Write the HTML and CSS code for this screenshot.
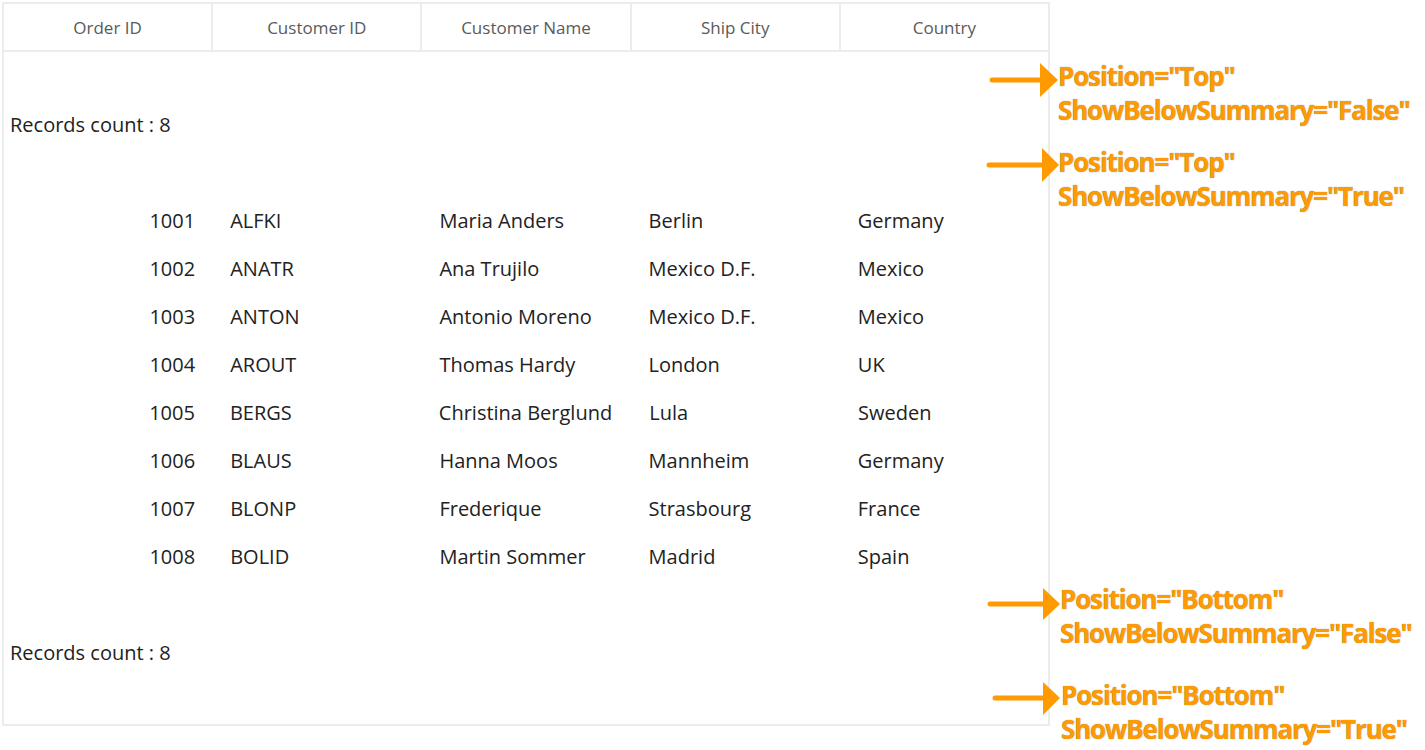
FILE: index.html
```html
<!DOCTYPE html>
<html>
<head>
<meta charset="utf-8">
<link rel="stylesheet" href="styles.css">
</head>
<body>
<div class="page">
  <div class="grid">
    <div class="header">
      <div class="hcell">Order ID</div>
      <div class="hcell">Customer ID</div>
      <div class="hcell">Customer Name</div>
      <div class="hcell">Ship City</div>
      <div class="hcell">Country</div>
    </div>
    <div class="body">
      <div class="row"></div>
      <div class="row summary">Records count : 8</div>
      <div class="row"></div>
      <div class="row data"><div class="cell num">1001</div><div class="cell">ALFKI</div><div class="cell">Maria Anders</div><div class="cell">Berlin</div><div class="cell">Germany</div></div>
      <div class="row data"><div class="cell num">1002</div><div class="cell">ANATR</div><div class="cell">Ana Trujilo</div><div class="cell">Mexico D.F.</div><div class="cell">Mexico</div></div>
      <div class="row data"><div class="cell num">1003</div><div class="cell">ANTON</div><div class="cell">Antonio Moreno</div><div class="cell">Mexico D.F.</div><div class="cell">Mexico</div></div>
      <div class="row data"><div class="cell num">1004</div><div class="cell">AROUT</div><div class="cell">Thomas Hardy</div><div class="cell">London</div><div class="cell">UK</div></div>
      <div class="row data"><div class="cell num">1005</div><div class="cell">BERGS</div><div class="cell">Christina Berglund</div><div class="cell">Lula</div><div class="cell">Sweden</div></div>
      <div class="row data"><div class="cell num">1006</div><div class="cell">BLAUS</div><div class="cell">Hanna Moos</div><div class="cell">Mannheim</div><div class="cell">Germany</div></div>
      <div class="row data"><div class="cell num">1007</div><div class="cell">BLONP</div><div class="cell">Frederique</div><div class="cell">Strasbourg</div><div class="cell">France</div></div>
      <div class="row data"><div class="cell num">1008</div><div class="cell">BOLID</div><div class="cell">Martin Sommer</div><div class="cell">Madrid</div><div class="cell">Spain</div></div>
      <div class="row"></div>
      <div class="row summary">Records count : 8</div>
      <div class="row"></div>
    </div>
  </div>

  <svg class="arrows" width="1425" height="750" viewBox="0 0 1425 750">
    <g stroke="#ff9a00" stroke-width="5" stroke-linecap="round" fill="none">
      <line x1="992" y1="80" x2="1044" y2="80"/>
      <line x1="989" y1="165" x2="1045" y2="165"/>
      <line x1="990" y1="604" x2="1045" y2="604"/>
      <line x1="995" y1="698" x2="1045" y2="698"/>
    </g>
    <g fill="#ff9a00">
      <polygon points="1040,63 1058,80 1040,97"/>
      <polygon points="1042,148 1059,165 1042,182"/>
      <polygon points="1043,588 1060,604 1043,620"/>
      <polygon points="1043,682 1060,698 1043,715"/>
    </g>
  </svg>

  <div class="note n1">Position="Top"<br>ShowBelowSummary="False"</div>
  <div class="note n2">Position="Top"<br>ShowBelowSummary="True"</div>
  <div class="note n3">Position="Bottom"<br>ShowBelowSummary="False"</div>
  <div class="note n4">Position="Bottom"<br>ShowBelowSummary="True"</div>
</div>
</body>
</html>
```

FILE: styles.css
```css
html, body {
  margin: 0;
  padding: 0;
  background: #ffffff;
}

.page {
  position: relative;
  width: 1425px;
  height: 750px;
  overflow: hidden;
  font-family: "Open Sans", "Noto Sans", sans-serif;
}

.grid {
  margin: 2px;
  width: 1048px;
  box-sizing: border-box;
  border: 2px solid #ececec;
  background: #ffffff;
}

.header {
  display: grid;
  grid-template-columns: repeat(5, 1fr);
  column-gap: 2px;
  background: #ececec;
  border-bottom: 2px solid #ececec;
}

.hcell {
  background: #ffffff;
  height: 46px;
  display: flex;
  align-items: center;
  justify-content: center;
  font-size: 17px;
  color: #5a5a5a;
}

.body {
  display: flex;
  flex-direction: column;
}

.row {
  height: 48px;
}

.summary {
  display: flex;
  align-items: center;
  padding-left: 6px;
  font-size: 20px;
  color: #222222;
}

.data {
  display: grid;
  grid-template-columns: repeat(5, 1fr);
  column-gap: 2px;
  align-items: center;
}

.cell {
  padding: 0 18px 0 17px;
  font-size: 20px;
  color: #222222;
  white-space: nowrap;
}

.cell.num {
  text-align: right;
  padding-right: 16px;
}

.arrows {
  position: absolute;
  left: 0;
  top: 0;
}

.note {
  position: absolute;
  font-family: "Open Sans", sans-serif;
  font-weight: 700;
  font-size: 26px;
  line-height: 34px;
  letter-spacing: -1.15px;
  color: #ff9a00;
  white-space: nowrap;
  text-shadow: 0 0 1px rgba(90, 70, 40, 0.7);
}

.n1 { left: 1058px; top: 59px; }
.n2 { left: 1058px; top: 145px; }
.n3 { left: 1060px; top: 582px; }
.n4 { left: 1061px; top: 678px; }
```
